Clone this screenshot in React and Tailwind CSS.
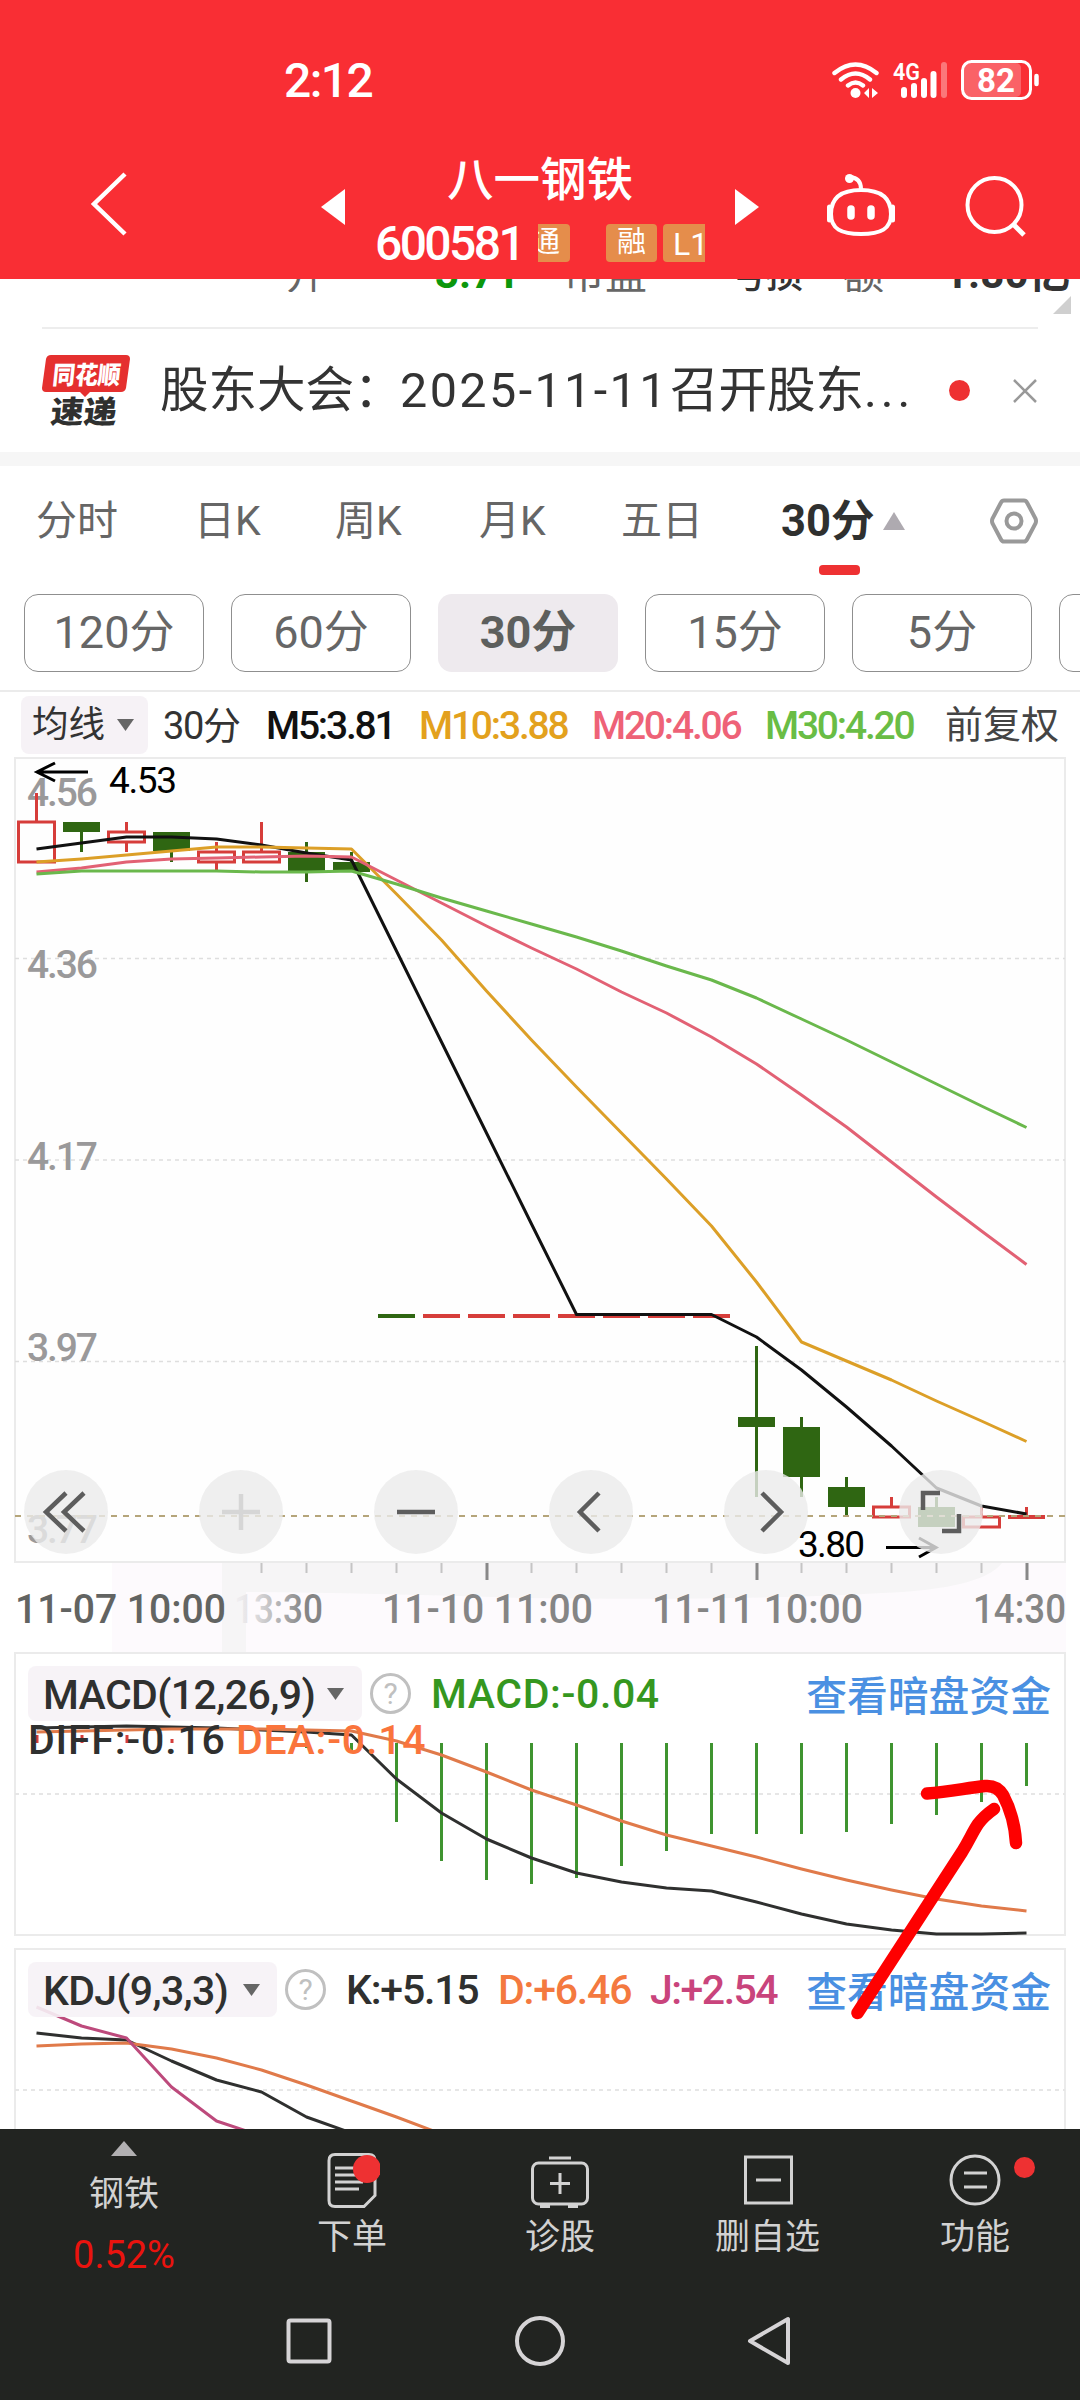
import { useState } from 'react';

const STEP = 45;
const xAt = (i) => 36.5 + i * STEP;

const GREEN = '#2f6612';
const RED = '#d63d3a';

// high / top / bottom / low, in chart pixels
const candles = [
  { up: true, h: 793, t: 822, b: 862, l: 862 },
  { up: false, h: 822, t: 822, b: 832, l: 852 },
  { up: true, h: 822, t: 832, b: 842, l: 852 },
  { up: false, h: 832, t: 832, b: 851, l: 862 },
  { up: true, h: 842, t: 852, b: 862, l: 870 },
  { up: true, h: 822, t: 852, b: 862, l: 862 },
  { up: false, h: 842, t: 852, b: 871, l: 882 },
  { up: false, h: 852, t: 862, b: 872, l: 872 },
  { up: false, flat: 1316 },
  { up: true, flat: 1316 },
  { up: true, flat: 1316 },
  { up: true, flat: 1316 },
  { up: true, flat: 1316 },
  { up: true, flat: 1316 },
  { up: true, flat: 1316 },
  { up: true, flat: 1316 },
  { up: false, h: 1346, t: 1417, b: 1427, l: 1497 },
  { up: false, h: 1417, t: 1427, b: 1477, l: 1497 },
  { up: false, h: 1477, t: 1487, b: 1507, l: 1517 },
  { up: true, h: 1497, t: 1507, b: 1517, l: 1517 },
  { up: false, h: 1497, t: 1507, b: 1527, l: 1527 },
  { up: true, h: 1507, t: 1517, b: 1527, l: 1527 },
  { up: true, h: 1507, flat: 1517 },
];

const averages = [
  { color: '#111111', ys: [849, 843, 837, 837, 839, 845, 853, 860, 951, 1042, 1133, 1224, 1314.5, 1314.5, 1314.5, 1314.5, 1337, 1370, 1407, 1446, 1488, 1506, 1514] },
  { color: '#dc9f27', ys: [862, 859, 855, 851, 847, 847, 848, 849, 894, 940, 991, 1040, 1087, 1133, 1179, 1226, 1282, 1342, 1361, 1380, 1401, 1421, 1441.5] },
  { color: '#e26174', ys: [872, 868, 862, 859, 858, 857, 856, 857, 880, 903, 926, 948, 969, 992, 1013, 1037, 1064, 1095, 1127, 1162, 1197, 1231, 1264.5] },
  { color: '#6ab84c', ys: [874, 871, 871, 871, 871, 872, 872, 871, 884, 898, 911, 924, 937, 951, 966, 980, 998, 1019, 1040, 1062, 1084, 1106, 1127.5] },
];

const priceLabels = [
  ['4.56', 806],
  ['4.36', 978],
  ['4.17', 1170],
  ['3.97', 1361],
  ['3.77', 1543],
];

const macdBars = [null, null, null, null, null, null, 1748, 1752, 1822, 1861, 1880, 1884, 1878, 1866, 1851, 1834, 1834, 1834, 1832, 1824, 1815, 1802, 1786];
const diff = [1728, 1727, 1726, 1727, 1728, 1730, 1732, 1735, 1779, 1813, 1839, 1858, 1873, 1882, 1888, 1891, 1902, 1914, 1924, 1930, 1934, 1934, 1933];
const dea = [1732, 1731, 1730, 1729, 1729, 1729, 1730, 1731, 1741, 1755, 1772, 1790, 1805, 1821, 1835, 1846, 1857, 1869, 1880, 1890, 1899, 1906, 1911];

const kdj = [
  { color: '#2f302f', ys: [2033, 2038, 2040, 2061, 2080, 2092, 2117, 2133] },
  { color: '#e07a4a', ys: [2046, 2044, 2043, 2049, 2058, 2070, 2085, 2101, 2117, 2134] },
  { color: '#bd4a7c', ys: [2007, 2026, 2038, 2087, 2121, 2136] },
];

const toPoints = (ys) => ys.map((y, i) => `${xAt(i)},${y}`).join(' ');

const tabs = [
  { label: '分时', cls: 'w-[158px]' },
  { label: '日K', cls: 'w-[141px]' },
  { label: '周K', cls: 'w-[144px]' },
  { label: '月K', cls: 'w-[142px]' },
  { label: '五日', cls: 'w-[160px]' },
];

const periods = ['120分', '60分', '30分', '15分', '5分', '1分'];

function Line({ ys, color }) {
  return <polyline points={toPoints(ys)} fill="none" stroke={color} strokeWidth="3" strokeLinejoin="round" />;
}

function Caret({ className }) {
  return (
    <svg width="19" height="12" viewBox="0 0 19 12" className={className}>
      <path d="M1 0h17L9.500 12z" fill="#666" />
    </svg>
  );
}

function StatusIcons() {
  return (
    <svg width="224" height="50" viewBox="820 54 224 50" fill="none" stroke="#fff" strokeLinecap="round">
      <path d="M834.500 72q21-17 42 0M841 78.500q14.500-12 29 0M848 84.500q7.500-6 15 0" strokeWidth="4.400" />
      <circle cx="855.500" cy="92" r="5" fill="#fff" stroke="none" />
      <path d="M864 92l5-5v10zM878 92l-6-5v10z" fill="#fff" stroke="none" />
      <text x="893" y="79" textLength="27" lengthAdjust="spacingAndGlyphs" fontSize="24" fontWeight="600" fill="#fff" stroke="none">4G</text>
      <path d="M904 89v5M914 85v9M924 80v14M933.500 73v21" strokeWidth="6" />
      <path d="M944 64v30" strokeWidth="6" opacity="0.35" />
      <rect x="964" y="62" width="57" height="34" rx="5" fill="#fff" fillOpacity="0.25" stroke="none" />
      <rect x="962.500" y="60.500" width="68" height="37" rx="9" strokeWidth="3" />
      <path d="M1036.500 75v8" strokeWidth="4.500" />
      <text x="977" y="91" textLength="38" lengthAdjust="spacingAndGlyphs" fontSize="34" fontWeight="700" fill="#fff" stroke="none">82</text>
    </svg>
  );
}

function RobotIcon() {
  return (
    <svg width="72" height="68" viewBox="825 171 72 68" fill="none" stroke="#fff" strokeWidth="4">
      <circle cx="849.500" cy="178.500" r="4.500" fill="#fff" stroke="none" />
      <path d="M850 177q11 1 11 12" />
      <path d="M861 190c20 0 30 8 30 24 0 15-10 20-30 20s-30-5-30-20c0-16 10-24 30-24z" />
      <path d="M829.500 207v13M892.500 207v13" strokeWidth="5" strokeLinecap="round" />
      <path d="M851 209v7M871 209v7" strokeWidth="7.500" strokeLinecap="round" />
    </svg>
  );
}

function Header() {
  return (
    <header className="h-[279px] bg-[#f92e34] text-white">
      <div className="flex h-[158px] items-center justify-between pt-[1px] pl-[284px] pr-[36px]">
        <span className="pt-[2px] text-[48px] font-medium tracking-[-1.600px]">2:12</span>
        <StatusIcons />
      </div>
      <div className="flex h-[112px] items-start pl-[88px]">
        <svg width="40" height="66" viewBox="0 0 40 66" className="mt-[13px] mr-[193px]">
          <path d="M37 3L6 33l31 30" fill="none" stroke="#fff" strokeWidth="4.500" />
        </svg>
        <svg width="24" height="36" viewBox="0 0 24 36" className="mt-[31px]">
          <path d="M24 0v36L0 18z" fill="#fff" />
        </svg>
        <div className="flex w-[390px] flex-col items-center">
          <h1 className="h-[60px] pt-px text-[46.500px] leading-[42px] font-medium">八一钢铁</h1>
          <div className="mt-[1px] flex h-[48px] w-[330px] items-center">
            <span className="w-[163px] pt-px text-[48px] leading-[48px] font-medium tracking-[-2.600px]">600581</span>
            <span className="flex h-[38px] w-[32px] justify-end overflow-hidden rounded-r bg-[#e58d4b] pr-[10px] text-[29px] leading-[36px]">通</span>
            <span className="ml-[36px] h-[38px] w-[51px] rounded bg-[#e58d4b] text-center text-[29px] leading-[36px]">融</span>
            <span className="ml-[6px] h-[38px] w-[42px] overflow-hidden rounded-l bg-[#e58d4b] pl-[10px] text-[32px] leading-[40px]">L1</span>
          </div>
        </div>
        <svg width="24" height="36" viewBox="0 0 24 36" className="mt-[31px]">
          <path d="M0 0v36l24-18z" fill="#fff" />
        </svg>
        <div className="mt-[13px] ml-[66px]"><RobotIcon /></div>
        <svg width="64" height="64" viewBox="964 174 64 64" className="mt-[16px] ml-[67px]" fill="none" stroke="#fff" strokeWidth="4">
          <circle cx="994.500" cy="205" r="27" />
          <path d="M1013 224l11 11" strokeWidth="5" />
        </svg>
      </div>
    </header>
  );
}

function NewsBar() {
  return (
    <section>
      <div className="flex h-[48px] flex-col justify-between">
        <div className="flex h-[13px] items-end overflow-hidden pl-[286px] text-[42px] leading-[50px] whitespace-nowrap text-[#666]">
          <div className="mb-[-7px] flex items-end">
            <span className="w-[149px] text-[40px] leading-[47px]">开</span>
            <span className="w-[128px] font-bold text-[#0c970c]">3.71</span>
            <span className="w-[166px] leading-[48px]">市盈</span>
            <span className="w-[113px] text-[37px] leading-[46px] font-medium text-[#333]">亏损</span>
            <span className="w-[102px] leading-[48px]">额</span>
            <span className="font-bold text-[#333]">1.80亿</span>
          </div>
        </div>
        <svg width="18" height="18" viewBox="0 0 18 18" className="mr-[9px] mb-[13px] self-end">
          <path d="M18 0v18H0z" fill="#cfcfcf" />
        </svg>
      </div>
      <div className="mx-[42px] h-[2px] bg-[#ededed]" />
      <div className="flex h-[123px] items-center pl-[42px]">
        <svg width="90" height="74" viewBox="42 353 90 74" className="mr-[28px]">
          <path d="M51 354h75q4 0 4 4l-4 29q-1 4-5 4h-31l-5 5-5-5H46q-4 0-4-4l4-29q1-4 5-4z" fill="#e5302f" />
          <text x="52" y="383" textLength="68" lengthAdjust="spacingAndGlyphs" fontSize="25" fontWeight="900" fill="#fff" transform="skewX(-6) translate(40 0)">同花顺</text>
          <text x="52" y="422" textLength="66" lengthAdjust="spacingAndGlyphs" fontSize="31" fontWeight="900" fill="#2f302f" transform="skewX(-6) translate(42 0)">速递</text>
        </svg>
        <div className="flex w-[789px] text-[48.500px] leading-[60px] whitespace-nowrap text-[#333]">
          <p className="w-[240px]">股东大会：</p>
          <p className="w-[270px] tracking-[2.400px]">2025-11-11</p>
          <p>召开股东<span className="tracking-[4px]">...</span></p>
        </div>
        <span className="h-[21px] w-[21px] rounded-full bg-[#ee3132]" />
        <svg width="24" height="24" viewBox="0 0 24 24" className="ml-[43px]">
          <path d="M1 1l22 22M23 1L1 23" stroke="#999" strokeWidth="2.500" />
        </svg>
      </div>
      <div className="h-[14px] bg-[#f6f6f6]" />
    </section>
  );
}

function Tabs({ period, onPeriod }) {
  return (
    <section className="h-[226px] border-b-2 border-[#ebebeb]">
      <div className="flex h-[110px] items-center pl-[36px] text-[41px] text-[#666]">
        {tabs.map((t) => (
          <span key={t.label} className={`${t.cls} pt-[2px]`}>{t.label}</span>
        ))}
        <div className="relative flex w-[209px] items-center font-bold text-[#2f302f]">
          <span className="pt-[2px] text-[43.500px]">30分</span>
          <svg width="22" height="18" viewBox="0 0 22 18" className="ml-[9px]">
            <path d="M11 0l11 18H0z" fill="#aeaab0" />
          </svg>
          <span className="absolute top-[78px] left-[38px] h-[10px] w-[41px] rounded-[4px] bg-[#ee3132]" />
        </div>
        <svg width="48" height="46" viewBox="0 0 48 46" fill="none" stroke="#999" strokeWidth="4">
          <path d="M14 2.500h20q2 0 3 2l8.500 16q1 2.500 0 5l-8.500 16q-1 2-3 2H14q-2 0-3-2l-8.500-16q-1-2.500 0-5l8.500-16q1-2 3-2z" />
          <circle cx="24" cy="23" r="7.500" />
        </svg>
      </div>
      <div className="mt-[18px] flex gap-[27px] overflow-hidden pl-[24px]">
        {periods.map((p) => (
          <button
            key={p}
            type="button"
            onClick={() => onPeriod(p)}
            className={
              p === period
                ? 'h-[78px] w-[180px] shrink-0 rounded-[14px] bg-[#eeeaee] text-[45px] font-bold text-[#5d5f5d]'
                : 'h-[78px] w-[180px] shrink-0 rounded-[14px] border border-[#8f8f8f] text-[45px] text-[#666]'
            }
          >
            {p}
          </button>
        ))}
      </div>
    </section>
  );
}

function Legend() {
  return (
    <div className="flex h-[65px] items-center pt-[1px] pl-[21px] text-[39px] tracking-[-2.200px] whitespace-nowrap">
      <span className="mr-[15px] flex h-[58px] w-[127px] items-center rounded-lg bg-[#f6f2f6] pl-[11px] text-[36.500px] tracking-normal text-[#333]">
        均线<Caret className="ml-[11px]" />
      </span>
      <span className="w-[103px] pt-[2px] text-[38px] tracking-[-1.300px] text-[#333]">30分</span>
      <span className="w-[153px] pt-[2px] font-medium text-[#111]">M5:3.81</span>
      <span className="w-[173px] pt-[2px] font-medium text-[#e3a11d]">M10:3.88</span>
      <span className="w-[173px] pt-[2px] font-medium text-[#ee6277]">M20:4.06</span>
      <span className="w-[180px] pt-[2px] font-medium text-[#69bd45]">M30:4.20</span>
      <span className="pt-px text-[38px] tracking-normal text-[#444]">前复权</span>
    </div>
  );
}

function Candle({ c, i }) {
  const x = xAt(i);
  const color = c.up ? RED : GREEN;
  if (c.flat) {
    return (
      <g fill={color}>
        <rect x={x - 18.5} y={c.flat - 2} width="37" height="4" />
        {c.h && <rect x={x - 1.5} y={c.h} width="3" height={c.flat - c.h} />}
      </g>
    );
  }
  if (c.up) {
    return (
      <g stroke={color} strokeWidth="3" fill="none">
        <rect x={x - 18} y={c.t} width="36" height={c.b - c.t} />
        <path d={`M${x} ${c.h}V${c.t}M${x} ${c.b}V${c.l}`} />
      </g>
    );
  }
  return (
    <g fill={color}>
      <rect x={x - 18.5} y={c.t} width="37" height={c.b - c.t} />
      <rect x={x - 1.5} y={c.h} width="3" height={c.l - c.h} />
    </g>
  );
}

const controls = [
  { d: 'M60 23L40 42l20 19M42 23L22 42l20 19' },
  { d: 'M42 24v36M23 42h38', faint: true },
  { d: 'M23 42h38' },
  { d: 'M50 23L31 42l19 19' },
  { d: 'M38 23l19 19-19 19' },
  { d: 'M24 40V23h17M60 44v17H43' },
];

function MainChart() {
  return (
    <div className="relative h-[805px]">
      <svg width="1080" height="896" viewBox="0 757 1080 896" className="absolute top-0 left-0">
        <rect x="112" y="1563" width="954" height="90" fill="#fdfafd" />
        <path d="M222 1563h780q-20 26-120 30-140 8-360 5-150-5-276-6v61h-24z" fill="#f6f5f6" />
        <rect x="15" y="758" width="1050" height="804" fill="#fefefe" stroke="#ebebeb" strokeWidth="2" />
        <g stroke="#dedede" strokeWidth="1.500" strokeDasharray="4 4">
          <path d="M15 958.500h1050M15 1160h1050M15 1361.500h1050" />
        </g>
        <g fontSize="39" fontWeight="500" fill="#9a999a">
          {priceLabels.map(([label, y]) => (
            <text key={label} x="27" y={y} textLength="71">{label}</text>
          ))}
        </g>
        {candles.map((c, i) => <Candle key={i} c={c} i={i} />)}
        {averages.map((a) => <Line key={a.color} {...a} />)}
        <path d="M15 1516h1050" stroke="#b5a57a" strokeWidth="2" strokeDasharray="6 6" />
        <g stroke="#000" strokeWidth="3" fill="none">
          <path d="M88 772H38M55 763l-18 9 18 9" />
          <path d="M886 1547.500h48M919 1538l17 9.500-17 9.500" />
        </g>
        <g fontSize="37" fill="#000">
          <text x="109" y="793" textLength="68">4.53</text>
          <text x="798" y="1557" textLength="67">3.80</text>
        </g>
        {candles.map((_, i) => {
          const major = i === 10 || i === 16 || i === 22;
          if (i < 5) return null;
          return (
            <rect key={i} x={xAt(i) - 1} y="1563" width={major ? 3 : 2} height={major ? 17 : 10} fill={major ? '#888' : '#c4c4c4'} />
          );
        })}
        <defs>
          <linearGradient id="fade" x1="236" x2="322" y1="0" y2="0" gradientUnits="userSpaceOnUse">
            <stop offset="0" stopColor="#f1eff1" />
            <stop offset="0.200" stopColor="#e2e0e2" />
            <stop offset="0.800" stopColor="#858585" />
          </linearGradient>
        </defs>
        <g fontSize="41" fontWeight="500" fill="#858585">
          <text x="234" y="1623" textLength="89" lengthAdjust="spacingAndGlyphs" fill="url(#fade)">13:30</text>
          <text x="15" y="1623" textLength="211" lengthAdjust="spacingAndGlyphs" fill="#626462">11-07 10:00</text>
          <text x="382" y="1623" textLength="211" lengthAdjust="spacingAndGlyphs">11-10 11:00</text>
          <text x="652" y="1623" textLength="211" lengthAdjust="spacingAndGlyphs">11-11 10:00</text>
          <text x="973" y="1623" textLength="93" lengthAdjust="spacingAndGlyphs">14:30</text>
        </g>
      </svg>
      <div className="absolute inset-x-0 bottom-[8px] flex gap-[91px] pl-[24px]">
        {controls.map((c) => (
          <button key={c.d} type="button" className="h-[84px] w-[84px] shrink-0 rounded-full bg-[#ebebeb]/80">
            <svg width="84" height="84" viewBox="0 0 84 84">
              <path d={c.d} fill="none" stroke={c.faint ? '#d6d6d6' : '#5d5d5d'} strokeWidth="4.500" />
            </svg>
          </button>
        ))}
      </div>
    </div>
  );
}

function IndicatorHead({ name, width, nameWidth, children }) {
  return (
    <div className="relative flex h-[55px] items-center text-[41px] font-medium tracking-[-1.200px] whitespace-nowrap">
      <span className={`${width} flex h-[55px] items-center rounded-lg bg-[#f6f2f6]/90 pl-[15px] text-[#2f302f]`}>
        <span className={`${nameWidth} pt-[4px]`}>{name}</span>
        <Caret />
      </span>
      <span className="mr-[20px] ml-[8px] flex h-[41px] w-[41px] items-center justify-center rounded-full border-[3px] border-[#c0c0c0] text-[30px] font-normal tracking-normal text-[#c0c0c0]">
        ?
      </span>
      {children}
      <a className="absolute top-px right-[13px] text-[40.800px] font-medium tracking-normal text-[#4a90e2]">查看暗盘资金</a>
    </div>
  );
}

function MacdPanel() {
  return (
    <div className="relative mx-[14px] mt-[90px] h-[284px] border-2 border-[#ebebeb] pt-[12px] pl-[12px]">
      <svg width="1080" height="284" viewBox="0 1652 1080 284" className="absolute -top-[2px] -left-[16px]">
        <path d="M15 1794h1050" stroke="#e6e6e6" strokeWidth="2" strokeDasharray="4 4" />
        {macdBars.map((y, i) => y && <rect key={i} x={xAt(i) - 1.5} y="1743" width="3" height={y - 1743} fill="#3f9430" />)}
        {[0, 1, 2, 3].map((i) => (
          <rect key={i} x={xAt(i) - 1} y={i === 3 ? 1739 : 1735} width="3" height={i === 3 ? 4 : 8} fill="#d63d3a" />
        ))}
        <Line ys={diff} color="#2f302f" />
        <Line ys={dea} color="#e07a4a" />
      </svg>
      <IndicatorHead name="MACD(12,26,9)" width="w-[334px]" nameWidth="w-[283px] tracking-[-0.600px]">
        <span className="pt-[3px] tracking-[0.600px] text-[#35971f]">MACD:-0.04</span>
      </IndicatorHead>
      <div className="relative -mt-[3px] flex text-[41px] leading-[44px] font-medium tracking-[0.800px] whitespace-nowrap">
        <span className="w-[208px] text-[#2f302f]">DIFF:-0.16</span>
        <span className="text-[#fa743c]">DEA:-0.14</span>
      </div>
    </div>
  );
}

function KdjPanel() {
  return (
    <div className="relative mx-[14px] mt-[12px] h-[181px] border-2 border-b-0 border-[#ebebeb] pt-[12px] pl-[12px]">
      <svg width="1080" height="181" viewBox="0 1948 1080 181" className="absolute -top-[2px] -left-[16px]">
        <path d="M15 2090h1050" stroke="#e6e6e6" strokeWidth="2" strokeDasharray="4 4" />
        {kdj.map((k) => <Line key={k.color} {...k} />)}
      </svg>
      <IndicatorHead name="KDJ(9,3,3)" width="w-[249px]" nameWidth="w-[199px] tracking-[-0.700px]">
        <span className="w-[152px] pt-[3px] text-[#2f302f]">K:+5.15</span>
        <span className="w-[152px] pt-[3px] text-[#f4793f]">D:+6.46</span>
        <span className="pt-[3px] tracking-[-1.500px] text-[#c9447c]">J:+2.54</span>
      </IndicatorHead>
    </div>
  );
}

function BottomBar() {
  return (
    <footer className="h-[271px] bg-[#222421] text-[35px] leading-[40px] text-[#d2d2d2]">
      <div className="relative flex h-[187px]">
        <div className="flex w-[248px] flex-col items-center pt-[12px]">
          <svg width="26" height="15" viewBox="0 0 26 15"><path d="M13 0l13 15H0z" fill="#b2b0b2" /></svg>
          <span className="mt-[19px]">钢铁</span>
          <span className="mt-[20px] text-[38px] text-[#ea130e]">0.52%</span>
        </div>
        <div className="flex w-[208px] flex-col items-center pt-[22px]">
          <svg width="56" height="58" viewBox="324 2150 56 58" fill="none" stroke="#d2d2d2" strokeWidth="3">
            <path d="M335 2153.500h34q6 0 6 6v35l-11 11h-29q-6 0-6-6v-40q0-6 6-6z" />
            <path d="M335 2167h28M335 2174h28M335 2181h28M335 2188h24" />
            <circle cx="367" cy="2168" r="14" fill="#ee3132" stroke="none" />
          </svg>
          <span className="mt-[9px]">下单</span>
        </div>
        <div className="flex w-[208px] flex-col items-center pt-[22px]">
          <svg width="60" height="58" viewBox="530 2150 60 58" fill="none" stroke="#d2d2d2" strokeWidth="3">
            <rect x="532.500" y="2162" width="55" height="41" rx="6" />
            <path d="M549 2157h22M560 2172v21M550 2182.500h20" />
            <path d="M540 2205h10M568 2205h10" strokeWidth="4" />
          </svg>
          <span className="mt-[9px]">诊股</span>
        </div>
        <div className="flex w-[207px] flex-col items-center pt-[22px]">
          <svg width="52" height="58" viewBox="741 2150 52 58" fill="none" stroke="#d2d2d2" strokeWidth="3">
            <rect x="744.500" y="2156" width="46" height="46" />
            <path d="M755 2179h25" />
          </svg>
          <span className="mt-[9px]">删自选</span>
        </div>
        <div className="flex w-[208px] flex-col items-center pt-[22px]">
          <svg width="56" height="58" viewBox="947 2150 56 58" fill="none" stroke="#d2d2d2" strokeWidth="3">
            <circle cx="975" cy="2179" r="24" />
            <path d="M964 2172h23M964 2186h23" />
          </svg>
          <span className="mt-[9px]">功能</span>
        </div>
        <span className="absolute top-[28px] left-[1014px] h-[21px] w-[21px] rounded-full bg-[#ee3132]" />
      </div>
      <div className="flex pl-[285px]">
        <svg width="520" height="50" viewBox="285 2316 520 50" fill="none" stroke="#d6d4d6" strokeWidth="4" strokeLinejoin="round">
          <rect x="288.500" y="2320.500" width="41" height="41" rx="2" />
          <circle cx="540" cy="2341" r="23" />
          <path d="M788 2319v44l-38-22z" />
        </svg>
      </div>
    </footer>
  );
}

export default function App() {
  const [period, setPeriod] = useState('30分');

  return (
    <div className="h-[2400px] w-[1080px] overflow-hidden bg-white font-[Roboto,'Noto_Sans_CJK_SC',sans-serif]">
      <Header />
      <NewsBar />
      <Tabs period={period} onPeriod={setPeriod} />
      <main className="relative">
        <Legend />
        <MainChart />
        <MacdPanel />
        <KdjPanel />
        {/* hand-drawn arrow */}
        <svg width="180" height="250" viewBox="850 1775 180 250" className="absolute top-[1083px] left-[850px]">
          <g fill="none" stroke="#fe0000" strokeWidth="12.500" strokeLinecap="round" strokeLinejoin="round">
            <path d="M927 1793.500C950 1792 966 1788 985 1786q12-1 18 9c8 15 12 30 13 48" />
            <path d="M994 1809q-10 7-16 15c-6 9-8 15-16 28L857.500 2013" />
          </g>
        </svg>
      </main>
      <BottomBar />
    </div>
  );
}
